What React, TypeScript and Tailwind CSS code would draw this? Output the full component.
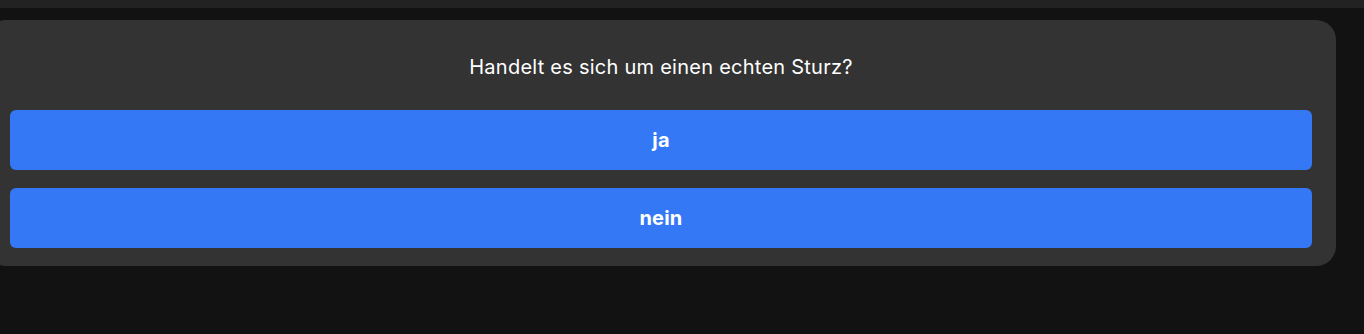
export default function App() {
  return (
    <div className="w-[1364px] h-[334px] bg-[#121212] overflow-hidden" style={{ fontFamily: "Inter, 'Noto Sans', sans-serif" }}>
      <div className="h-[8px] bg-[#222222]" />
      <div className="pt-[12px]">
        <div className="-ml-[14px] w-[1350px] rounded-[20px] bg-[#333333] px-[24px] pt-[34px] pb-[18px] flex flex-col">
          <div className="h-[26px] flex items-center justify-center text-white text-[20px] leading-[26px] tracking-[0.25px]">
            Handelt es sich um einen echten Sturz?
          </div>
          <div className="mt-[30px] flex flex-col gap-[18px]">
            <button className="h-[60px] w-full rounded-[6px] bg-[#3478f6] text-white font-bold text-[20px] tracking-[0.2px]">ja</button>
            <button className="h-[60px] w-full rounded-[6px] bg-[#3478f6] text-white font-bold text-[20px] tracking-[0.2px]">nein</button>
          </div>
        </div>
      </div>
    </div>
  );
}
